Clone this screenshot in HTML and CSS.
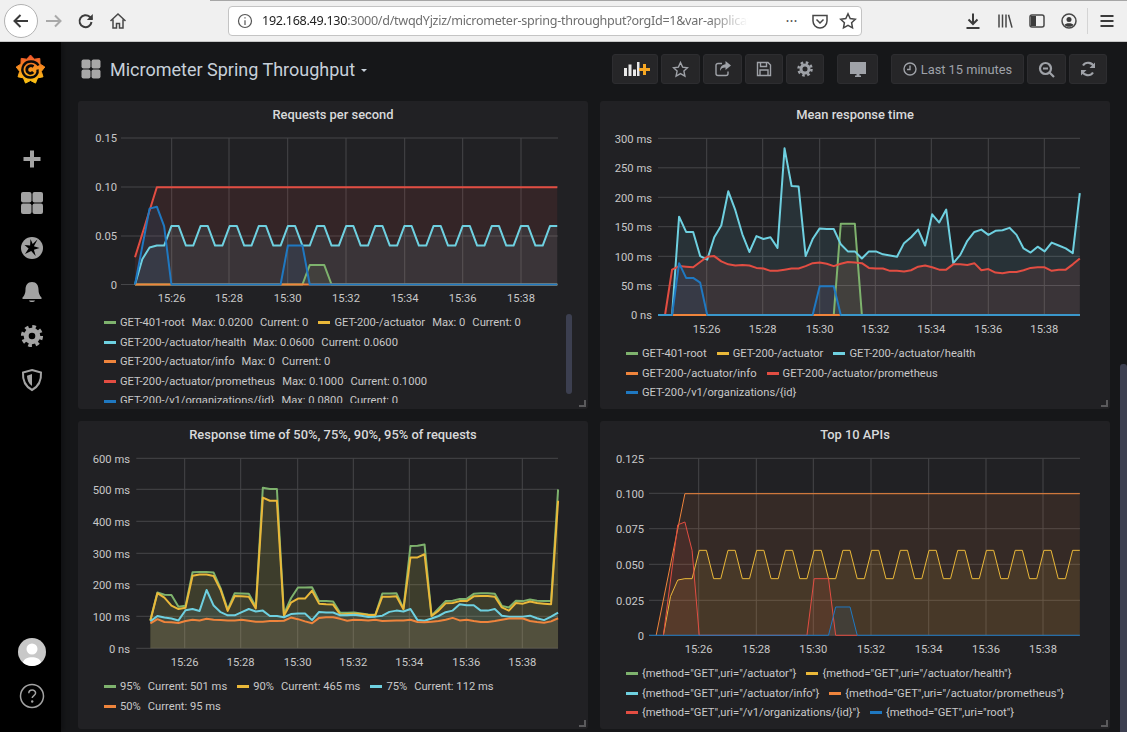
FILE: index.html
```html
<!DOCTYPE html>
<html lang="en">
<head>
<meta charset="utf-8">
<title>Micrometer Spring Throughput</title>
<link rel="stylesheet" href="styles.css">
</head>
<body>
<header class="browser">
  <div class="nav-group">
    <button class="back"><svg width="20" height="20" viewBox="0 0 20 20"><path class="ico-dark" d="M17 10H4M9.500 4 3.500 10l6 6"/></svg></button>
    <svg class="fwd" width="20" height="20" viewBox="0 0 20 20"><path class="ico-gray" d="M2 10h14M11 4.500l5.500 5.500-5.500 5.500"/></svg>
    <svg class="reload" width="20" height="20" viewBox="0 0 20 20"><path class="ico-dark" d="M15.500 11a6 6 0 1 1-1.800-5.200L16 8"/><path class="solid-dark" d="M16.800 3v6h-6z"/></svg>
    <svg class="home" width="20" height="20" viewBox="0 0 20 20"><path class="ico-thin" d="M2.500 10 10 3l7.500 7M5 8.500V17h3.500v-4.500h3V17H15V8.500"/></svg>
  </div>
  <div class="urlbar">
    <svg class="info" width="16" height="16" viewBox="0 0 16 16"><circle class="ico-info" cx="8" cy="8" r="6.500"/><path class="ico-info" d="M8 7.200V12M8 4.200v1.400"/></svg>
    <div class="url"><span class="host">192.168.49.130</span>:3000/d/twqdYjziz/micrometer-spring-throughput?orgId=1&amp;var-applicati</div>
    <span class="dots">•••</span>
    <svg class="pocket" width="18" height="18" viewBox="0 0 18 18"><path class="ico-thin" d="M2 3.500h14v5.500a7 7 0 0 1-14 0zM5.500 7.500 9 11l3.500-3.500"/></svg>
    <svg class="star-ff" width="18" height="18" viewBox="0 0 18 18"><path class="ico-thin" d="m9 1.800 2.200 4.700 5.100.7-3.700 3.500.9 5.100L9 13.400l-4.500 2.400.9-5.100-3.700-3.500 5.100-.7z"/></svg>
  </div>
  <div class="tools">
    <svg width="18" height="18" viewBox="0 0 18 18"><path class="ico-dark" d="M9 1.500v10M4.500 7.500 9 12l4.500-4.500M2.500 16h13"/></svg>
    <svg width="18" height="18" viewBox="0 0 18 18"><path class="ico-thin" d="M3 2.500v13M6.500 2.500v13M10 2.500v13M12.500 2.800l3.500 12.800"/></svg>
    <svg width="18" height="18" viewBox="0 0 18 18"><rect class="ico-thin" x="2" y="3" width="14" height="12" rx="2"/><path class="solid-dark" d="M3 4h5v10H3z"/></svg>
    <svg width="18" height="18" viewBox="0 0 18 18"><circle class="ico-thin" cx="9" cy="9" r="7"/><circle class="solid-dark" cx="9" cy="7.500" r="2.500"/><path class="solid-dark" d="M4.500 13c1-2.500 8-2.500 9 0-2 2.400-7 2.400-9 0z"/></svg>
    <span class="tool-sep"></span>
    <svg width="18" height="18" viewBox="0 0 18 18"><path class="ico-dark" d="M2.500 4h13M2.500 9h13M2.500 14h13"/></svg>
  </div>
</header>

<div class="app">
  <aside class="side">
    <div class="side-top">
      <svg class="logo" width="31" height="31" viewBox="0 0 31 31">
        <defs><linearGradient id="gf" x1="0" y1="0" x2="0" y2="1"><stop offset="0" stop-color="#f0522b"/><stop offset="0.500" stop-color="#f7931e"/><stop offset="1" stop-color="#fcc412"/></linearGradient></defs>
        <polygon class="logo-core" points="15.500,1 19.300,5.200 24.800,4.400 25,10 29.800,13 26.300,17.400 28,22.800 22.600,23.900 20.500,29.100 15.500,26.500 10.500,29.100 8.400,23.900 3,22.800 4.700,17.400 1.200,13 6,10 6.200,4.400 11.700,5.200"/>
        <path class="logo-spiral" d="M23.500 11.500C20.500 6.500 12 6 8.500 11.500 5.500 17 9 23.500 15.500 23.500 20.500 23.500 23.500 19.500 22.500 15.500"/>
        <path class="logo-spiral-in" d="M18.500 12.500C15.500 10.500 11.500 12.500 11.800 16 12 19 16 20.500 18.200 18"/>
      </svg>
      <nav class="side-icons">
        <svg width="24" height="24" viewBox="0 0 24 24"><path class="side-fill" d="M10 3.500h4V10h6.500v4H14v6.500h-4V14H3.500v-4H10z"/></svg>
        <svg width="24" height="24" viewBox="0 0 24 24"><rect class="side-fill" x="1" y="1" width="10.500" height="10.500" rx="2"/><rect class="side-fill" x="12.500" y="1" width="10.500" height="10.500" rx="2"/><rect class="side-fill" x="1" y="12.500" width="10.500" height="10.500" rx="2"/><rect class="side-fill" x="12.500" y="12.500" width="10.500" height="10.500" rx="2"/></svg>
        <svg width="24" height="24" viewBox="0 0 24 24"><circle class="side-fill" cx="12" cy="12" r="11"/><path class="side-cut" d="m17.500 3.500-3.600 6.700 5.600 1.800-5.600 1.800 1.800 6.200-4.500-5-6.200 3 3.600-5.500L4.500 9l5.600.4L10.500 3l2.200 5z"/></svg>
        <svg width="24" height="24" viewBox="0 0 22 24"><path class="side-fill" d="M11 2c4.500 0 6.500 3.500 6.500 7.500 0 3.500 1 6 3 8v1.500h-19v-1.500c2-2 3-4.500 3-8C4.500 5.500 6.500 2 11 2zM8 20.500h6c-.5 2-5.500 2-6 0z"/></svg>
        <svg width="24" height="24" viewBox="0 0 24 24"><circle class="gear-ring" cx="12" cy="12" r="5.800"/><circle class="gear-teeth" cx="12" cy="12" r="9.300"/></svg>
        <svg width="24" height="24" viewBox="0 0 22 24"><path class="side-line" d="M11 2 20 4.500c.5 8-2.500 14-9 17.500C4.500 18.500 1.500 12.500 2 4.500z"/><path class="side-fill" d="M11 6v12c-3.500-2.500-5-6.500-5-10.300z"/></svg>
      </nav>
    </div>
    <div class="side-bottom">
      <svg width="28" height="28" viewBox="0 0 28 28"><circle class="avatar-bg" cx="14" cy="14" r="14"/><circle class="avatar-fg" cx="14" cy="11" r="5.500"/><path class="avatar-fg" d="M5 24.500c1-7 17-7 18 0-4.500 4.500-13.500 4.500-18 0z"/></svg>
      <svg width="26" height="26" viewBox="0 0 26 26"><circle class="help-line" cx="13" cy="13" r="11.500"/><path class="help-line" d="M9.800 10.300c0-4.300 6.800-4.300 6.800-.2 0 2.500-3.400 2.500-3.400 5"/><circle class="help-dot" cx="13.200" cy="18.500" r="1.200"/></svg>
    </div>
  </aside>

  <main class="main">
    <div class="topbar">
      <div class="dash-title">
        <svg width="20" height="20" viewBox="0 0 20 20"><rect class="grid-ico" x="0.500" y="0.500" width="9" height="9" rx="2"/><rect class="grid-ico" x="10.500" y="0.500" width="9" height="9" rx="2"/><rect class="grid-ico" x="0.500" y="10.500" width="9" height="9" rx="2"/><rect class="grid-ico" x="10.500" y="10.500" width="9" height="9" rx="2"/></svg>
        <span class="dash-name">Micrometer Spring Throughput</span>
        <span class="caret"></span>
      </div>
      <div class="actions">
        <button class="btn btn-add"><svg width="30" height="18" viewBox="0 0 30 18"><path class="bar-w" d="M4 8h3v8H4zM8.500 4.500h3V16h-3zM13 9.500h3V16h-3zM17 2h2.500v14H17z"/><path class="bar-o" d="M23 4h3v4h4v3h-4v4h-3v-4h-4V8h4z"/></svg></button>
        <button class="btn btn-sq"><svg width="17" height="17" viewBox="0 0 17 17"><path class="btn-line" d="m8.500 1.500 2.100 4.600 5 .6-3.700 3.400 1 5-4.400-2.500-4.400 2.500 1-5-3.700-3.400 5-.6z"/></svg></button>
        <button class="btn btn-sq"><svg width="18" height="18" viewBox="0 0 18 18"><path class="btn-line" d="M8 3.500H4a2 2 0 0 0-2 2v8a2 2 0 0 0 2 2h8a2 2 0 0 0 2-2v-2"/><path class="btn-fill" d="M11.500 1 17 5.500l-5.500 4.500V7.500c-3 0-4.500 1-5.500 3.500 0-4 2-6.500 5.500-6.800z"/></svg></button>
        <button class="btn btn-sq2"><svg width="16" height="16" viewBox="0 0 16 16"><path class="btn-line" d="M1.500 1.500h10.500l2.500 2.500v10.500h-13zM4.500 1.500v4h6v-4M4 14.500v-5.500h8v5.500"/></svg></button>
        <button class="btn btn-sq2"><svg width="16" height="16" viewBox="0 0 16 16"><circle class="gear-b" cx="8" cy="8" r="4"/><circle class="gear-bt" cx="8" cy="8" r="6.500"/></svg></button>
        <button class="btn btn-tv"><svg width="18" height="18" viewBox="0 0 18 18"><path class="btn-fill" d="M1 2h16v12H1zM6 15.500h6V17H6zM7.500 14h3v1.500h-3z"/></svg></button>
        <button class="btn btn-time"><svg width="14" height="14" viewBox="0 0 14 14"><circle class="btn-line" cx="7" cy="7" r="6"/><path class="btn-line" d="M7 3.500V7.500H4"/></svg><span>Last 15 minutes</span></button>
        <button class="btn btn-sq3"><svg width="17" height="17" viewBox="0 0 17 17"><circle class="btn-thick" cx="7.500" cy="7.500" r="5.500"/><path class="btn-thick" d="M5 7.500h5M11.500 11.500 16 16"/></svg></button>
        <button class="btn btn-sq2"><svg width="16" height="16" viewBox="0 0 16 16"><path class="btn-thick" d="M14 6A6.200 6.200 0 0 0 3 4.500M2 10a6.200 6.200 0 0 0 11 1.500"/><path class="btn-fill" d="M15 1.500V7H9.500zM1 14.500V9h5.500z"/></svg></button>
      </div>
    </div>

    <div class="grid">
      <!-- Requests per second -->
      <section class="panel">
        <h2 class="panel-title">Requests per second</h2>
        <svg class="chart c1" width="510" height="184" viewBox="78 129 510 184">
          <g class="grid-lines">
            <path d="M121 138H558M121 187H558M121 236H558M121 284.500H558M171.700 138V284.500M229 138V284.500M287.700 138V284.500M346 138V284.500M404.700 138V284.500M462.700 138V284.500M521 138V284.500"/>
          </g>
          <g class="axis-y">
            <text x="117" y="142">0.15</text><text x="117" y="191">0.10</text><text x="117" y="240">0.05</text><text x="117" y="288.500">0</text>
          </g>
          <g class="axis-x">
            <text x="171.700" y="302">15:26</text><text x="229" y="302">15:28</text><text x="287.700" y="302">15:30</text><text x="346" y="302">15:32</text><text x="404.700" y="302">15:34</text><text x="462.700" y="302">15:36</text><text x="521" y="302">15:38</text>
          </g>
          <g transform="translate(135 284.500) scale(7.280 -9.730)">
            <polygon class="f green" points="23,0 24,2 26,2 27,0"/>
            <polygon class="f cyan" points="0,0 1,2.600 2,3.800 3,4 4,4 5,6 6,6 7,4 8,4 9,6 10,6 11,4 12,4 13,6 14,6 15,4 16,4 17,6 18,6 19,4 20,4 21,6 22,6 23,4 24,4 25,6 26,6 27,4 28,4 29,6 30,6 31,4 32,4 33,6 34,6 35,4 36,4 37,6 38,6 39,4 40,4 41,6 42,6 43,4 44,4 45,6 46,6 47,4 48,4 49,6 50,6 51,4 52,4 53,6 54,6 55,4 56,4 57,6 58,6 58,0"/>
            <polygon class="f red" points="0,0 0,2.800 3,10 58,10 58,0"/>
            <polygon class="f blue" points="0,0 2,7.800 3,8 4,6 5,0 20,0 21,4 23,4 24,0"/>
            <polyline class="l green" points="0,0 23,0 24,2 26,2 27,0 58,0"/>
            <polyline class="l cyan" points="0,0 1,2.600 2,3.800 3,4 4,4 5,6 6,6 7,4 8,4 9,6 10,6 11,4 12,4 13,6 14,6 15,4 16,4 17,6 18,6 19,4 20,4 21,6 22,6 23,4 24,4 25,6 26,6 27,4 28,4 29,6 30,6 31,4 32,4 33,6 34,6 35,4 36,4 37,6 38,6 39,4 40,4 41,6 42,6 43,4 44,4 45,6 46,6 47,4 48,4 49,6 50,6 51,4 52,4 53,6 54,6 55,4 56,4 57,6 58,6"/>
            <polyline class="l orange" points="0,0 58,0"/>
            <polyline class="l red" points="0,2.800 3,10 58,10"/>
            <polyline class="l blue" points="0,0 2,7.800 3,8 4,6 5,0 20,0 21,4 23,4 24,0 58,0"/>
          </g>
        </svg>
        <div class="legend legend-scroll">
          <div class="li"><i class="sw s-green"></i><span>GET-401-root</span><span class="v">Max: 0.0200</span><span class="v">Current: 0</span></div>
          <div class="li"><i class="sw s-yellow"></i><span>GET-200-/actuator</span><span class="v">Max: 0</span><span class="v">Current: 0</span></div>
          <div class="li li-break"><i class="sw s-cyan"></i><span>GET-200-/actuator/health</span><span class="v">Max: 0.0600</span><span class="v">Current: 0.0600</span></div>
          <div class="li li-break"><i class="sw s-orange"></i><span>GET-200-/actuator/info</span><span class="v">Max: 0</span><span class="v">Current: 0</span></div>
          <div class="li li-break"><i class="sw s-red"></i><span>GET-200-/actuator/prometheus</span><span class="v">Max: 0.1000</span><span class="v">Current: 0.1000</span></div>
          <div class="li li-break"><i class="sw s-blue"></i><span>GET-200-/v1/organizations/{id}</span><span class="v">Max: 0.0800</span><span class="v">Current: 0</span></div>
        </div>
        <span class="thumb"></span>
      </section>

      <!-- Mean response time -->
      <section class="panel">
        <h2 class="panel-title">Mean response time</h2>
        <svg class="chart c2" width="510" height="215" viewBox="600 129 510 215">
          <g class="grid-lines">
            <path d="M658 138.300H1080M658 167.800H1080M658 197.300H1080M658 226.700H1080M658 256.300H1080M658 285.500H1080M658 315H1080M706.700 138.300V315M762.700 138.300V315M819.700 138.300V315M875.300 138.300V315M931.300 138.300V315M988.300 138.300V315M1044.300 138.300V315"/>
          </g>
          <g class="axis-y">
            <text x="652" y="142.500">300 ms</text><text x="652" y="172">250 ms</text><text x="652" y="201.500">200 ms</text><text x="652" y="231">150 ms</text><text x="652" y="260.500">100 ms</text><text x="652" y="290">50 ms</text><text x="652" y="319">0 ns</text>
          </g>
          <g class="axis-x">
            <text x="706.700" y="333">15:26</text><text x="762.700" y="333">15:28</text><text x="819.700" y="333">15:30</text><text x="875.300" y="333">15:32</text><text x="931.300" y="333">15:34</text><text x="988.300" y="333">15:36</text><text x="1044.300" y="333">15:38</text>
          </g>
          <g transform="translate(658 315) scale(7.030 -0.589)">
            <polygon class="f green" points="25,0 26,155 28,155 29,0"/>
            <polygon class="f cyan" points="2,0 3,167 4,141 5,141 6,100 7,94 8,132 9,152 10,210 11,178 12,137 13,107 14,134 15,129 16,132 17,114 18,283 19,219 20,218 21,100 22,129 23,147 24,146 25,146 26,120 27,108 28,108 29,96 30,108 31,108 32,103 33,101 34,99 35,122 36,132 37,145 38,118 39,171 40,157 41,179 42,88 43,102 44,126 45,141 46,145 47,136 48,143 49,144 50,148 51,136 52,113 53,106 54,116 55,108 56,123 57,118 58,113 59,105 60,207 60,0"/>
            <polygon class="f red" points="1,0 2,77 3,83 4,82 5,81 6,90 7,99 8,100 9,91 10,86 11,84 12,85 13,84 14,80 15,79 16,75 17,75 18,77 19,79 20,79 21,83 22,88 23,89 24,87 25,83 26,87 27,90 28,89 29,88 30,80 31,79 32,79 33,75 34,75 35,74 36,76 37,82 38,84 39,81 40,77 41,77 42,86 43,86 44,85 45,88 46,76 47,78 48,72 49,71 50,73 51,73 52,76 53,80 54,81 55,81 56,75 57,77 58,77 59,86 60,96 60,0"/>
            <polygon class="f blue" points="2,0 3,88 4,63 5,63 6,55 7,0 22,0 23,49 25,49 26,0"/>
            <polyline class="l green" points="0,0 25,0 26,155 28,155 29,0 60,0"/>
            <polyline class="l cyan" points="0,0 2,0 3,167 4,141 5,141 6,100 7,94 8,132 9,152 10,210 11,178 12,137 13,107 14,134 15,129 16,132 17,114 18,283 19,219 20,218 21,100 22,129 23,147 24,146 25,146 26,120 27,108 28,108 29,96 30,108 31,108 32,103 33,101 34,99 35,122 36,132 37,145 38,118 39,171 40,157 41,179 42,88 43,102 44,126 45,141 46,145 47,136 48,143 49,144 50,148 51,136 52,113 53,106 54,116 55,108 56,123 57,118 58,113 59,105 60,207"/>
            <polyline class="l orange" points="2,0 60,0"/>
            <polyline class="l red" points="1,0 2,77 3,83 4,82 5,81 6,90 7,99 8,100 9,91 10,86 11,84 12,85 13,84 14,80 15,79 16,75 17,75 18,77 19,79 20,79 21,83 22,88 23,89 24,87 25,83 26,87 27,90 28,89 29,88 30,80 31,79 32,79 33,75 34,75 35,74 36,76 37,82 38,84 39,81 40,77 41,77 42,86 43,86 44,85 45,88 46,76 47,78 48,72 49,71 50,73 51,73 52,76 53,80 54,81 55,81 56,75 57,77 58,77 59,86 60,96"/>
            <polyline class="l blue" points="0,0 2,0 3,88 4,63 5,63 6,55 7,0 22,0 23,49 25,49 26,0 60,0"/>
            <path class="l veil" d="M0 0H2M7 0H22M26 0H60"/>
          </g>
        </svg>
        <div class="legend">
          <div class="li"><i class="sw s-green"></i><span>GET-401-root</span></div>
          <div class="li"><i class="sw s-yellow"></i><span>GET-200-/actuator</span></div>
          <div class="li"><i class="sw s-cyan"></i><span>GET-200-/actuator/health</span></div>
          <div class="li"><i class="sw s-orange"></i><span>GET-200-/actuator/info</span></div>
          <div class="li"><i class="sw s-red"></i><span>GET-200-/actuator/prometheus</span></div>
          <div class="li"><i class="sw s-blue"></i><span>GET-200-/v1/organizations/{id}</span></div>
        </div>
      </section>

      <!-- Response time -->
      <section class="panel">
        <h2 class="panel-title">Response time of 50%, 75%, 90%, 95% of requests</h2>
        <svg class="chart c3" width="510" height="228" viewBox="78 449 510 228">
          <g class="grid-lines">
            <path d="M136.300 458.300H558M136.300 489.300H558M136.300 521.300H558M136.300 553.300H558M136.300 584.700H558M136.300 616.300H558M136.300 648.300H558M184.700 458.300V648.300M240.700 458.300V648.300M297.700 458.300V648.300M353.300 458.300V648.300M409.300 458.300V648.300M466.300 458.300V648.300M522.300 458.300V648.300"/>
          </g>
          <g class="axis-y">
            <text x="130" y="462.500">600 ms</text><text x="130" y="494">500 ms</text><text x="130" y="525.500">400 ms</text><text x="130" y="557.500">300 ms</text><text x="130" y="589">200 ms</text><text x="130" y="620.500">100 ms</text><text x="130" y="652.500">0 ns</text>
          </g>
          <g class="axis-x">
            <text x="184.700" y="666">15:26</text><text x="240.700" y="666">15:28</text><text x="297.700" y="666">15:30</text><text x="353.300" y="666">15:32</text><text x="409.300" y="666">15:34</text><text x="466.300" y="666">15:36</text><text x="522.300" y="666">15:38</text>
          </g>
          <g transform="translate(136.300 648.300) scale(7.030 -0.3167)">
            <polygon class="f green" points="2,0 2,89 3,176 4,169 5,168 6,131 7,134 8,240 9,241 10,241 11,239 12,189 13,123 14,174 15,173 16,172 17,132 18,507 19,503 20,503 21,108 22,158 23,192 24,192 25,193 26,149 27,149 28,148 29,112 30,112 31,113 32,110 33,107 34,106 35,173 36,173 37,174 38,126 39,323 40,324 41,328 42,103 43,126 44,149 45,150 46,156 47,156 48,172 49,174 50,174 51,172 52,134 53,129 54,150 55,149 56,154 57,150 58,149 59,149 60,502 60,0"/>
            <polygon class="f yellow" points="2,0 2,87 3,174 4,160 5,135 6,124 7,128 8,229 9,233 10,233 11,228 12,184 13,118 14,165 15,164 16,163 17,126 18,476 19,466 20,466 21,103 22,144 23,157 24,157 25,182 26,141 27,139 28,138 29,107 30,108 31,109 32,108 33,105 34,105 35,163 36,163 37,164 38,123 39,287 40,287 41,297 42,102 43,119 44,142 45,143 46,149 47,149 48,164 49,165 50,165 51,163 52,129 53,119 54,143 55,141 56,148 57,143 58,141 59,139 60,466 60,0"/>
            <polygon class="f cyan" points="2,0 2,85 3,102 4,97 5,94 6,88 7,120 8,124 9,118 10,184 11,135 12,114 13,104 14,104 15,114 16,124 17,116 18,119 19,102 20,102 21,98 22,108 23,110 24,110 25,89 26,115 27,113 28,113 29,104 30,104 31,106 32,103 33,99 34,100 35,103 36,115 37,119 38,116 39,124 40,89 41,87 42,94 43,102 44,114 45,119 46,139 47,136 48,136 49,119 50,119 51,124 52,103 53,100 54,100 55,100 56,103 57,95 58,89 59,100 60,113 60,0"/>
            <polygon class="f orange" points="2,0 2,79 3,92 4,83 5,82 6,80 7,86 8,90 9,88 10,93 11,90 12,89 13,88 14,88 15,90 16,87 17,84 18,84 19,86 20,86 21,87 22,97 23,92 24,85 25,79 26,96 27,98 28,98 29,93 30,87 31,90 32,89 33,88 34,90 35,86 36,87 37,88 38,88 39,90 40,83 41,82 42,84 43,86 44,90 45,96 46,88 47,90 48,86 49,83 50,83 51,86 52,90 53,94 54,94 55,94 56,86 57,83 58,81 59,85 60,95 60,0"/>
            <polyline class="l green" points="2,89 3,176 4,169 5,168 6,131 7,134 8,240 9,241 10,241 11,239 12,189 13,123 14,174 15,173 16,172 17,132 18,507 19,503 20,503 21,108 22,158 23,192 24,192 25,193 26,149 27,149 28,148 29,112 30,112 31,113 32,110 33,107 34,106 35,173 36,173 37,174 38,126 39,323 40,324 41,328 42,103 43,126 44,149 45,150 46,156 47,156 48,172 49,174 50,174 51,172 52,134 53,129 54,150 55,149 56,154 57,150 58,149 59,149 60,502"/>
            <polyline class="l yellow" points="2,87 3,174 4,160 5,135 6,124 7,128 8,229 9,233 10,233 11,228 12,184 13,118 14,165 15,164 16,163 17,126 18,476 19,466 20,466 21,103 22,144 23,157 24,157 25,182 26,141 27,139 28,138 29,107 30,108 31,109 32,108 33,105 34,105 35,163 36,163 37,164 38,123 39,287 40,287 41,297 42,102 43,119 44,142 45,143 46,149 47,149 48,164 49,165 50,165 51,163 52,129 53,119 54,143 55,141 56,148 57,143 58,141 59,139 60,466"/>
            <polyline class="l cyan" points="2,85 3,102 4,97 5,94 6,88 7,120 8,124 9,118 10,184 11,135 12,114 13,104 14,104 15,114 16,124 17,116 18,119 19,102 20,102 21,98 22,108 23,110 24,110 25,89 26,115 27,113 28,113 29,104 30,104 31,106 32,103 33,99 34,100 35,103 36,115 37,119 38,116 39,124 40,89 41,87 42,94 43,102 44,114 45,119 46,139 47,136 48,136 49,119 50,119 51,124 52,103 53,100 54,100 55,100 56,103 57,95 58,89 59,100 60,113"/>
            <polyline class="l orange" points="2,79 3,92 4,83 5,82 6,80 7,86 8,90 9,88 10,93 11,90 12,89 13,88 14,88 15,90 16,87 17,84 18,84 19,86 20,86 21,87 22,97 23,92 24,85 25,79 26,96 27,98 28,98 29,93 30,87 31,90 32,89 33,88 34,90 35,86 36,87 37,88 38,88 39,90 40,83 41,82 42,84 43,86 44,90 45,96 46,88 47,90 48,86 49,83 50,83 51,86 52,90 53,94 54,94 55,94 56,86 57,83 58,81 59,85 60,95"/>
          </g>
        </svg>
        <div class="legend">
          <div class="li"><i class="sw s-green"></i><span>95%</span><span class="v">Current: 501 ms</span></div>
          <div class="li"><i class="sw s-yellow"></i><span>90%</span><span class="v">Current: 465 ms</span></div>
          <div class="li"><i class="sw s-cyan"></i><span>75%</span><span class="v">Current: 112 ms</span></div>
          <div class="li li-break"><i class="sw s-orange"></i><span>50%</span><span class="v">Current: 95 ms</span></div>
        </div>
      </section>

      <!-- Top 10 APIs -->
      <section class="panel">
        <h2 class="panel-title">Top 10 APIs</h2>
        <svg class="chart c4" width="510" height="215" viewBox="600 449 510 215">
          <g class="grid-lines">
            <path d="M649 458.300H1080M649 493.300H1080M649 528.700H1080M649 564.300H1080M649 600.300H1080M649 635.300H1080M698.700 458.300V635.300M756.300 458.300V635.300M813.300 458.300V635.300M871 458.300V635.300M928.700 458.300V635.300M986 458.300V635.300M1043 458.300V635.300"/>
          </g>
          <g class="axis-y">
            <text x="644" y="462.500">0.125</text><text x="644" y="497.500">0.100</text><text x="644" y="533">0.075</text><text x="644" y="568.500">0.050</text><text x="644" y="604.500">0.025</text><text x="644" y="639.500">0</text>
          </g>
          <g class="axis-x">
            <text x="698.700" y="653">15:26</text><text x="756.300" y="653">15:28</text><text x="813.300" y="653">15:30</text><text x="871" y="653">15:32</text><text x="928.700" y="653">15:34</text><text x="986" y="653">15:36</text><text x="1043" y="653">15:38</text>
          </g>
          <g transform="translate(649 635.300) scale(7.180 -14.160)">
            <polygon class="f yellow" points="2,0 3,2.750 4,3.900 5,4 6,4 7,6 8,6 9,4 10,4 11,6 12,6 13,4 14,4 15,6 16,6 17,4 18,4 19,6 20,6 21,4 22,4 23,6 24,6 25,4 26,4 27,6 28,6 29,4 30,4 31,6 32,6 33,4 34,4 35,6 36,6 37,4 38,4 39,6 40,6 41,4 42,4 43,6 44,6 45,4 46,4 47,6 48,6 49,4 50,4 51,6 52,6 53,4 54,4 55,6 56,6 57,4 58,4 59,6 60,6 60,0"/>
            <polygon class="f orange" points="1,0 5,10 60,10 60,0"/>
            <polygon class="f red" points="2,0 4,7.800 5,8 6,6 7,0 22,0 23,4 25,4 26,0"/>
            <polygon class="f blue" points="25,0 26,2 28,2 29,0"/>
            <polyline class="l t yellow" points="2,0 3,2.750 4,3.900 5,4 6,4 7,6 8,6 9,4 10,4 11,6 12,6 13,4 14,4 15,6 16,6 17,4 18,4 19,6 20,6 21,4 22,4 23,6 24,6 25,4 26,4 27,6 28,6 29,4 30,4 31,6 32,6 33,4 34,4 35,6 36,6 37,4 38,4 39,6 40,6 41,4 42,4 43,6 44,6 45,4 46,4 47,6 48,6 49,4 50,4 51,6 52,6 53,4 54,4 55,6 56,6 57,4 58,4 59,6 60,6"/>
            <polyline class="l t orange" points="1,0 5,10 60,10"/>
            <polyline class="l t red" points="2,0 4,7.800 5,8 6,6 7,0 22,0 23,4 25,4 26,0 29,0"/>
            <polyline class="l t blue" points="0,0 7,0 22,0 25,0 26,2 28,2 29,0 60,0"/>
          </g>
        </svg>
        <div class="legend">
          <div class="li"><i class="sw s-green"></i><span>{method="GET",uri="/actuator"}</span></div>
          <div class="li"><i class="sw s-yellow"></i><span>{method="GET",uri="/actuator/health"}</span></div>
          <div class="li"><i class="sw s-cyan"></i><span>{method="GET",uri="/actuator/info"}</span></div>
          <div class="li"><i class="sw s-orange"></i><span>{method="GET",uri="/actuator/prometheus"}</span></div>
          <div class="li"><i class="sw s-red"></i><span>{method="GET",uri="/v1/organizations/{id}"}</span></div>
          <div class="li"><i class="sw s-blue"></i><span>{method="GET",uri="root"}</span></div>
        </div>
      </section>
    </div>
    <span class="page-thumb"></span>
  </main>
</div>
</body>
</html>
```

FILE: styles.css
```css
* { box-sizing: border-box; }
html, body { margin: 0; padding: 0; height: 732px; overflow: hidden; }
body { background: #161719; font-family: Roboto, "Liberation Sans", sans-serif; display: flex; flex-direction: column; }
button { font: inherit; padding: 0; margin: 0; }

/* browser chrome */
.browser { height: 42px; flex: none; background: #f0f0f0; border-bottom: 1px solid #c6c6c6; display: flex; align-items: center; position: relative; }
.browser::before { content: ""; position: absolute; left: 210px; right: 0; top: 0; height: 1px; background: #a6a6a6; }
.nav-group { display: flex; align-items: center; width: 228px; flex: none; padding-left: 4px; }
.back { width: 34px; height: 34px; border-radius: 50%; background: #fff; border: 1px solid #b2b2b2; display: flex; align-items: center; justify-content: center; }
.fwd { margin-left: 6px; }
.reload { margin-left: 12px; }
.home { margin-left: 12px; }
.ico-dark { fill: none; stroke: #3b3b3b; stroke-width: 2; }
.ico-gray { fill: none; stroke: #a9a9a9; stroke-width: 2; }
.ico-thin { fill: none; stroke: #474747; stroke-width: 1.5; }
.ico-info { fill: none; stroke: #555; stroke-width: 1.2; }
.solid-dark { fill: #3b3b3b; }
.urlbar { width: 634px; height: 30px; flex: none; background: #fff; border: 1px solid #c4c4c4; border-radius: 4px; display: flex; align-items: center; padding-left: 8px; }
.info { flex: none; }
.url { width: 486px; margin-left: 9px; flex: none; font: 12.600px "Noto Sans", Roboto, sans-serif; letter-spacing: -0.3px; color: #6f6f6f; white-space: nowrap; -webkit-mask-image: linear-gradient(90deg, #000 92%, transparent); mask-image: linear-gradient(90deg, #000 92%, transparent); }
.host { color: #222; }
.dots { margin-left: 38px; font-size: 9px; color: #555; letter-spacing: 1px; width: 20px; flex: none; }
.pocket { margin-left: 5px; flex: none; }
.star-ff { margin-left: 10px; flex: none; }
.tools { display: flex; align-items: center; margin-left: 102px; gap: 14px; }
.tool-sep { width: 1px; height: 26px; background: #d4d4d4; margin: 0 -4px 0 -5px; }

/* layout */
.app { flex: 1; display: flex; min-height: 0; }
.side { width: 61px; flex: none; background: #000; display: flex; flex-direction: column; justify-content: space-between; align-items: center; padding-bottom: 23px; box-shadow: 2px 0 6px rgba(0,0,0,.35); }
.side-top { display: flex; flex-direction: column; align-items: center; padding-left: 3px; }
.logo { margin-top: 12px; margin-right: 3px; }
.side-icons { display: flex; flex-direction: column; align-items: center; margin-top: 62px; gap: 20.300px; }
.side-fill { fill: #a3a3a3; }
.side-cut { fill: #000; }
.side-line { fill: none; stroke: #a3a3a3; stroke-width: 2; }
.gear-ring { fill: none; stroke: #a3a3a3; stroke-width: 5; }
.gear-teeth { fill: none; stroke: #a3a3a3; stroke-width: 3.500; stroke-dasharray: 3.650 3.650; }
.side-bottom { display: flex; flex-direction: column; align-items: center; gap: 17px; padding-left: 3px; }
.avatar-bg { fill: #c8c8c8; }
.avatar-fg { fill: #fff; }
.help-line { fill: none; stroke: #a3a3a3; stroke-width: 1.500; }
.help-dot { fill: #a3a3a3; }
.logo-core { fill: url(#gf); stroke: url(#gf); stroke-width: 1; stroke-linejoin: round; }
.logo-spiral { fill: none; stroke: #0a0a0a; stroke-width: 2.400; }
.logo-spiral-in { fill: none; stroke: #0a0a0a; stroke-width: 2.800; }

.main { flex: 1; min-width: 0; padding-left: 17px; position: relative; }
.topbar { height: 59px; display: flex; align-items: flex-start; justify-content: space-between; padding-top: 12px; padding-right: 20px; }
.dash-title { display: flex; align-items: center; height: 30px; padding-left: 3px; }
.grid-ico { fill: #a8a8a8; }
.dash-name { font-size: 18px; color: #c7d0d9; margin-left: 9px; }
.caret { width: 0; height: 0; margin-left: 6px; margin-top: 3px; border: 3.500px solid transparent; border-top-color: #c7d0d9; border-bottom-width: 0; }
.actions { display: flex; height: 30px; }
.btn { height: 30px; background: #262628; border: 1px solid #2d2d30; border-radius: 3px; display: flex; align-items: center; justify-content: center; margin-left: 3px; color: #9fa2a8; }
.btn-add { width: 46px; margin-left: 0; }
.btn-sq { width: 39px; }
.btn-sq2 { width: 38px; }
.btn-sq3 { width: 39px; }
.btn-tv { width: 41px; margin-left: 13px; }
.btn-time { width: 133px; margin-left: 13px; font-size: 12.800px; gap: 4px; }
.bar-w { fill: #e8e8e8; }
.bar-o { fill: #f5a623; }
.btn-line { fill: none; stroke: #9fa2a8; stroke-width: 1.400; }
.btn-thick { fill: none; stroke: #9fa2a8; stroke-width: 2.200; }
.btn-fill { fill: #9fa2a8; }
.gear-b { fill: none; stroke: #9fa2a8; stroke-width: 3; }
.gear-bt { fill: none; stroke: #9fa2a8; stroke-width: 2.500; stroke-dasharray: 2.550 2.550; }

/* panels */
.grid { display: grid; grid-template-columns: 510px 510px; grid-template-rows: 308px 308px; gap: 12px; }
.panel { background: #212124; border-radius: 3px; position: relative; overflow: hidden; }
.panel::after { content: ""; position: absolute; right: 2px; bottom: 2px; width: 5px; height: 5px; border-right: 2px solid #5a5a5c; border-bottom: 2px solid #5a5a5c; }
.panel-title { margin: 0; height: 28px; text-align: center; font-size: 12.900px; font-weight: 500; line-height: 28px; color: #d8d9da; }
.chart { display: block; }
.grid-lines path { fill: none; stroke: #464649; stroke-width: 1; }
.axis-y text { text-anchor: end; font-size: 11.200px; fill: #c8c8c8; }
.axis-x text { text-anchor: middle; font-size: 11.200px; fill: #c8c8c8; }
.l { fill: none; stroke-width: 2; vector-effect: non-scaling-stroke; stroke-linejoin: round; }
.l.t { stroke-width: 1; }
.l.veil { stroke: #6ed0e0; stroke-opacity: .35; }
.f { stroke: none; fill-opacity: 0.1; }
.l.green { stroke: #7eb26d; } .f.green { fill: #7eb26d; }
.l.yellow { stroke: #eab839; } .f.yellow { fill: #eab839; }
.l.cyan { stroke: #6ed0e0; } .f.cyan { fill: #6ed0e0; }
.l.orange { stroke: #ef843c; } .f.orange { fill: #ef843c; }
.l.red { stroke: #e24d42; } .f.red { fill: #e24d42; }
.l.blue { stroke: #1f78c1; } .f.blue { fill: #1f78c1; }

.legend { display: flex; flex-wrap: wrap; padding-left: 26px; padding-right: 26px; font-size: 11.200px; line-height: 19.600px; color: #c8c8c8; column-gap: 10px; }
.legend-scroll { height: 90px; overflow: hidden; }
.li { display: flex; align-items: center; white-space: nowrap; }
.li-break { flex-basis: 100%; }
.sw { width: 12px; height: 3px; margin-right: 4px; flex: none; }
.v { margin-left: 7px; }
.s-green { background: #7eb26d; } .s-yellow { background: #eab839; } .s-cyan { background: #6ed0e0; }
.s-orange { background: #ef843c; } .s-red { background: #e24d42; } .s-blue { background: #1f78c1; }
.thumb { position: absolute; left: 488px; top: 213px; width: 6px; height: 80px; border-radius: 3px; background: #3c3f50; }
.page-thumb { position: absolute; right: 0; top: 322px; width: 7px; height: 369px; border-radius: 3px 3px 0 0; background: #3c3f50; }
```
